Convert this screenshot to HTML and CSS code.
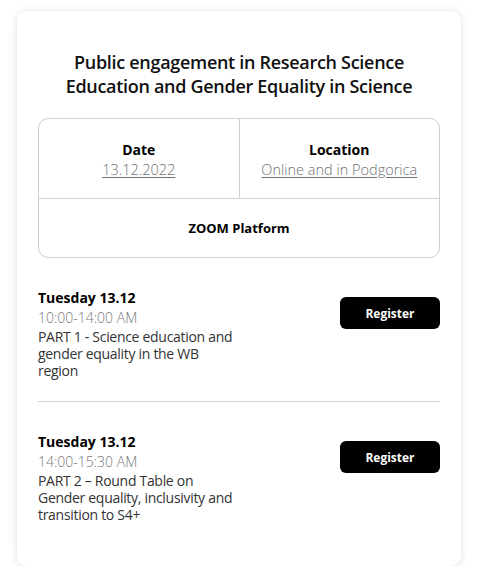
FILE: index.html
```html
<!DOCTYPE html>
<html>
<head>
<meta charset="utf-8">
<link rel="stylesheet" href="styles.css">
</head>
<body>
<div class="card">
  <h1 class="title">Public engagement in Research Science Education and Gender Equality in Science</h1>
  <div class="info">
    <div class="info-row">
      <div class="cell cell-left">
        <div class="label">Date</div>
        <a class="value" href="#">13.12.2022</a>
      </div>
      <div class="cell">
        <div class="label">Location</div>
        <a class="value" href="#">Online and in Podgorica</a>
      </div>
    </div>
    <div class="info-bottom">ZOOM Platform</div>
  </div>
  <div class="session">
    <div class="session-text">
      <div class="day">Tuesday 13.12</div>
      <div class="time">10:00-14:00 AM</div>
      <div class="desc">PART 1 - Science education and gender equality in the WB region</div>
    </div>
    <a class="btn" href="#">Register</a>
  </div>
  <div class="divider"></div>
  <div class="session">
    <div class="session-text">
      <div class="day">Tuesday 13.12</div>
      <div class="time">14:00-15:30 AM</div>
      <div class="desc">PART 2 – Round Table on Gender equality, inclusivity and transition to S4+</div>
    </div>
    <a class="btn" href="#">Register</a>
  </div>
</div>
</body>
</html>
```
FILE: styles.css
```css
* { box-sizing: border-box; }
body {
  margin: 0;
  background: #ffffff;
  font-family: "Open Sans", "Noto Sans", sans-serif;
  color: #000;
}
.card {
  margin: 11px 0 0 17px;
  width: 444px;
  height: 555px;
  background: #fff;
  border-radius: 10px;
  box-shadow: 0 1px 8px rgba(0,0,0,0.13);
  padding: 39px 21px 0 21px;
}
.title {
  margin: 0 auto;
  width: 370px;
  font-size: 18px;
  line-height: 24px;
  font-weight: 600;
  text-align: center;
  letter-spacing: -0.3px;
  color: #111;
}
.info {
  margin-top: 20px;
  border: 1px solid #cfcfcf;
  border-radius: 10px;
}
.info-row {
  display: flex;
  height: 80px;
  border-bottom: 1px solid #cfcfcf;
}
.cell {
  flex: 1;
  display: flex;
  flex-direction: column;
  align-items: center;
  justify-content: center;
  padding-top: 3px;
}
.cell-left { border-right: 1px solid #cfcfcf; }
.label {
  font-size: 14px;
  font-weight: 700;
  line-height: 20px;
}
.value {
  font-size: 14.5px;
  line-height: 20px;
  font-weight: 300;
  color: #707070;
  text-decoration: underline;
  text-decoration-color: #707070;
  text-underline-offset: 2px;
}
.info-bottom {
  height: 58px;
  display: flex;
  align-items: center;
  justify-content: center;
  font-size: 13px;
  font-weight: 700;
}
.session {
  display: flex;
  justify-content: space-between;
  align-items: flex-start;
  padding-top: 31px;
  padding-bottom: 22px;
}
.session-text { width: 200px; }
.day {
  font-size: 14px;
  font-weight: 700;
  line-height: 18px;
}
.time {
  font-size: 14px;
  font-weight: 300;
  color: #777;
  line-height: 21px;
}
.desc {
  font-size: 14px;
  line-height: 17px;
  color: #333;
  letter-spacing: -0.3px;
}
.btn {
  margin-top: 8px;
  width: 100px;
  height: 32px;
  background: #000;
  color: #fff;
  border-radius: 6px;
  font-size: 12px;
  font-weight: 700;
  text-decoration: none;
  display: flex;
  align-items: center;
  justify-content: center;
}
.divider {
  height: 1px;
  background: #cfcfcf;
}
```
